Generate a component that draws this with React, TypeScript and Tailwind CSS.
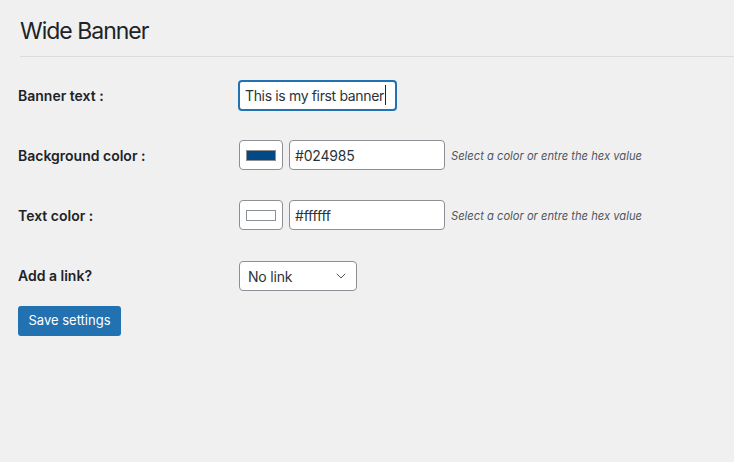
import { ChevronDown } from "lucide-react";

const font = { fontFamily: "Inter, 'Liberation Sans', sans-serif" };

function ColorRow({ label, value, swatch }: { label: string; value: string; swatch: string }) {
  return (
    <div className="flex h-[60px] items-center">
      <div className="w-[239px] shrink-0 pl-[18px] text-[14px] font-semibold text-[#1d2327]">{label}</div>
      <div className="flex items-center">
        <button className="flex h-[30px] w-[44px] items-center justify-center rounded-[4px] border border-[#8c8f94] bg-white">
          <span className={`block h-[11px] w-[30px] border border-[#8c8f94] ${swatch}`} />
        </button>
        <input
          readOnly
          value={value}
          className="ml-[6px] h-[30px] w-[156px] rounded-[4px] border border-[#8c8f94] bg-white px-[5px] text-[14px] tracking-[-0.2px] text-[#2c3338] outline-none"
        />
        <span className="ml-[6px] mt-[3px] text-[11.2px] italic text-[#50575e]">Select a color or entre the hex value</span>
      </div>
    </div>
  );
}

export default function App() {
  return (
    <div className="min-h-[462px] w-full bg-[#f0f0f1]" style={font}>
      <div className="pl-[20px] pt-[16px]">
        <h1 className="h-[30px] text-[23px] font-normal leading-[30px] tracking-[-1px] text-[#1d2327]">Wide Banner</h1>
        <div className="mt-[10px] border-b border-[#dcdcde]" />
      </div>

      <div className="mt-[8px]">
        <div className="flex h-[60px] items-center">
          <div className="w-[238px] shrink-0 pl-[18px] text-[14px] font-semibold text-[#1d2327]">Banner text :</div>
          <div className="flex h-[31px] w-[159px] items-center rounded-[4px] border-2 border-[#2271b1] bg-white px-[5px] text-[14px] tracking-[-0.35px] text-[#2c3338]">
            <span>This is my first banner</span>
            <span className="ml-[1px] h-[20px] w-[1px] bg-[#1d2327]" />
          </div>
        </div>

        <ColorRow label="Background color :" value="#024985" swatch="bg-[#024985]" />
        <ColorRow label="Text color :" value="#ffffff" swatch="bg-white" />

        <div className="flex h-[60px] items-center">
          <div className="w-[239px] shrink-0 pl-[18px] text-[14px] font-semibold text-[#1d2327]">Add a link?</div>
          <div className="mt-[2px] flex h-[30px] w-[118px] items-center justify-between rounded-[4px] border border-[#8c8f94] bg-white pl-[8px] pr-[7px] text-[14px] tracking-[-0.2px] text-[#2c3338]">
            <span>No link</span>
            <ChevronDown className="h-[16px] w-[16px] text-[#50575e]" strokeWidth={1.5} />
          </div>
        </div>
      </div>

      <div className="pl-[18px] pt-[1px]">
        <button className="h-[30px] w-[103px] rounded-[3px] bg-[#2271b1] text-[13px] text-white">Save settings</button>
      </div>
    </div>
  );
}
